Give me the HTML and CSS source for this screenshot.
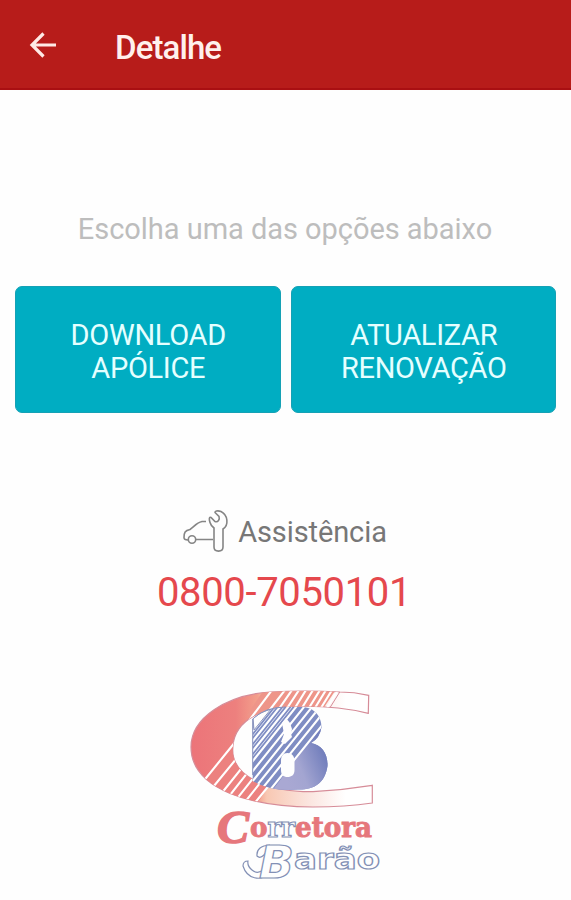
FILE: index.html
```html
<!DOCTYPE html>
<html lang="pt-BR">
<head>
<meta charset="utf-8">
<title>Detalhe</title>
<link rel="stylesheet" href="styles.css">
</head>
<body>
<header class="app-bar">
  <svg class="back" viewBox="0 0 28 28" aria-label="Voltar"><path d="M27 14H3M14.500 2.500 3 14l11.500 11.500"/></svg>
  <h1 class="title">Detalhe</h1>
</header>
<main class="content">
  <p class="prompt">Escolha uma das opções abaixo</p>
  <div class="actions">
    <button class="action">DOWNLOAD<br>APÓLICE</button>
    <button class="action">ATUALIZAR<br>RENOVAÇÃO</button>
  </div>
  <div class="assist">
    <svg class="assist-icon" viewBox="182 508 48 46">
      <path d="M206 521.500h-4c-5 1-8 5-12 8-5 1-6 3-6 8 0 2 1 2.500 4 2.500M196 539.500h17"/>
      <circle cx="192" cy="539.500" r="3.700"/>
      <path d="M214 528v19c0 5.500 9 5.500 9 0v-18c6-4 5-14-2-17.500-4-1.500-6 0-6 1l4 4c1 3-1 6-4 5l-4-4c-2-1-2 2-1 5 .7 2.500 2 4 4 5.500Z"/>
    </svg>
    <span class="assist-label">Assistência</span>
  </div>
  <p class="phone">0800-7050101</p>
  <svg class="logo" viewBox="180 680 210 210" role="img" aria-label="Corretora Barão">
    <defs>
      <linearGradient id="red" gradientUnits="userSpaceOnUse" x1="190" y1="0" x2="373" y2="0">
        <stop offset="0" stop-color="#ec7479"/><stop offset=".25" stop-color="#ed807e"/><stop offset=".37" stop-color="#f3a08c"/><stop offset=".42" stop-color="#f8c8b3"/><stop offset=".65" stop-color="#fbe5df"/><stop offset=".85" stop-color="#fff"/>
      </linearGradient>
      <linearGradient id="blue" gradientUnits="userSpaceOnUse" x1="284" y1="775" x2="325" y2="758">
        <stop offset="0" stop-color="#a9a8d3"/><stop offset=".4" stop-color="#a3a5d1"/><stop offset="1" stop-color="#7480bd"/>
      </linearGradient>
      <clipPath id="cClip"><path id="cShape" d="M368.700 695.300Q354 692 340 692Q305 690 270 692C226 695 191 718 191 747C191 790 253 807 313 807Q345 807 372.300 803V785.300Q343 790 313 791.700C266 792 232.700 776 232.700 750C232.700 724 256 708 293 706.500Q334 705 368.300 713.300Z"/></clipPath>
      <clipPath id="bClip"><path id="bShape" d="M252.700 719Q265 707 286 707H301C315 707 321.500 717 321.500 727Q320 738 311 743C322 745 328 754 327.500 766C325 784 313 790 298 789.500Q271 792 252.700 781Z"/></clipPath>
    </defs>
    <use href="#cShape" class="c-body"/>
    <g clip-path="url(#cClip)">
      <path class="top-bars" d="M267 685h72l-20 30h-72Z"/>
      <path class="low-bars" d="m234 742 38 39-20 30-50-26Z"/>
      <path class="c-divider" d="m341 690-15 24"/>
      <path class="cuts" d="m272 690-24 32M285 690l-20 26M292 690l-18 26M299 690l-17 26M306 690l-16 26M313 690l-16 26M320 690l-16 26M326 690l-16 26M332 690l-16 26M338 690l-16 26M236 741l-34 42M246 747l-37 45M253 754l-36 45M259 758l-36 46M266 762l-34 43M272 768l-31 39M279 773l-29 36"/>
    </g>
    <g clip-path="url(#bClip)">
      <path class="b-body" d="M250 700h82v94h-82z"/>
      <path class="b-solid" d="m333 711-68 89 75-4Z"/>
      <path class="cuts" d="m276 702-32 40M284 702l-40 50M292 702l-48 60M300 702l-56 70M308 702l-64 80M316 702l-72 90M324 702l-74 92M331 703l-74 92M336 708l-74 92"/>
      <path class="fine-cuts" d="m280 702-32 40M288 702l-44 55M296 702l-52 65"/>
      <path class="b-corner" d="M253 718q9-7 18-9l-17 21Z"/>
    </g>
    <path class="b-line" d="M252.700 775V719Q265 707 286 707"/>
    <path class="paper" d="m282 723 4-5 4 5 2 6-1 5 1 3q-3 3-7 7l-4-2 3-8ZM281 761c0-5 2-8 6.500-8s7 3 7 8v9c0 5-3 7-7 7s-6.500-2-6.500-7Z"/>
    <g class="logo-red">
      <text class="logo-initial" x="217" y="843" textLength="32" lengthAdjust="spacingAndGlyphs">C</text>
      <text class="logo-word" x="250" y="836.500" textLength="122" lengthAdjust="spacingAndGlyphs">o<tspan class="logo-outline">rr</tspan>etora</text>
    </g>
    <g class="logo-outline">
      <path d="M270 845Q256 846 257 856q3 3 7-1 2-4 8-4l-8 18q-6 6-12 1-5-4-4-9-5 0-5 5c4 13 18 16 26 7"/>
      <text class="barao-initial" x="259" y="878" textLength="35" lengthAdjust="spacingAndGlyphs">B</text>
      <text class="barao-word" x="294" y="869" textLength="86" lengthAdjust="spacingAndGlyphs">arão</text>
    </g>
  </svg>
</main>
</body>
</html>
```
FILE: styles.css
```css
* { box-sizing: border-box; }
body { margin: 0; width: 571px; height: 900px; overflow: hidden; background: #fefefe; font-family: Roboto, sans-serif; }
.app-bar { height: 90px; display: flex; align-items: center; gap: 58px; padding: 6px 30px 0; background: #b71c1a; border-bottom: 2px solid #a90f12; color: #fff0ed; }
.back { width: 28px; height: 28px; margin: -5px 0 0 -1px; fill: none; stroke: #ffe9e5; stroke-width: 3.2; }
.title { margin: 0; padding-top: 1px; font-size: 33px; line-height: 40px; font-weight: 500; letter-spacing: -.9px; }
.content { display: flex; flex-direction: column; align-items: center; }
.prompt { margin: 119px 0 0 -1px; font-size: 29px; line-height: 40px; letter-spacing: -.04px; color: #bdbdbd; white-space: nowrap; }
.actions { display: grid; grid-template-columns: 1fr 1fr; gap: 10px; width: 541px; height: 127px; margin-top: 37px; }
.action { padding: 5px 0 0 1px; border: 1px solid #15a1b5; border-radius: 7px; background: #00adc2; color: #e5ffff; font: 400 29px/33.5px Roboto, sans-serif; letter-spacing: -.3px; }
.assist { display: flex; align-items: center; gap: 8px; height: 46px; margin: 95px 0 0 -2px; }
.assist-icon { width: 48px; height: 46px; fill: none; stroke: #858585; stroke-width: 1.6; }
.assist-label { padding-top: 1px; font-size: 29px; line-height: 46px; letter-spacing: -.1px; color: #777; }
.phone { margin: 14px 0 0 -3px; font-size: 40px; line-height: 50px; letter-spacing: -.35px; color: #e5484d; }
.logo { width: 210px; height: 210px; margin: 62px 0 0 -1px; }
.c-body { fill: url(#red); stroke: #d68c98; stroke-width: 1.2; }
.top-bars { fill: #ee9589; }
.low-bars { fill: #ec817f; }
.c-divider { fill: none; stroke: #d68c98; stroke-width: 1; }
.cuts { fill: none; stroke: #fff; stroke-width: 2.1; }
.fine-cuts { fill: none; stroke: #dfe3f2; stroke-width: 1; }
.b-body { fill: #7f8dc3; }
.b-solid { fill: url(#blue); }
.b-corner { fill: #fefefe; stroke: #8993bd; stroke-width: 1; }
.b-line { fill: none; stroke: #8993bd; stroke-width: 1; }
.paper { fill: #fefefe; }
.logo-red { fill: #e6777c; font-family: "DejaVu Serif", serif; font-weight: 700; }
.logo-initial { font: italic 700 46px "Liberation Serif", serif; stroke: #e6777c; stroke-width: 1.5; }
.logo-word { font-size: 27px; stroke: #e6777c; stroke-width: .9; }
.logo-outline { fill: #fefefe; stroke: #8390b5; stroke-width: 1.2; }
.barao-initial { font: italic 700 44px "DejaVu Sans", sans-serif; }
.barao-word { font: 700 28px "DejaVu Sans", sans-serif; }
```
